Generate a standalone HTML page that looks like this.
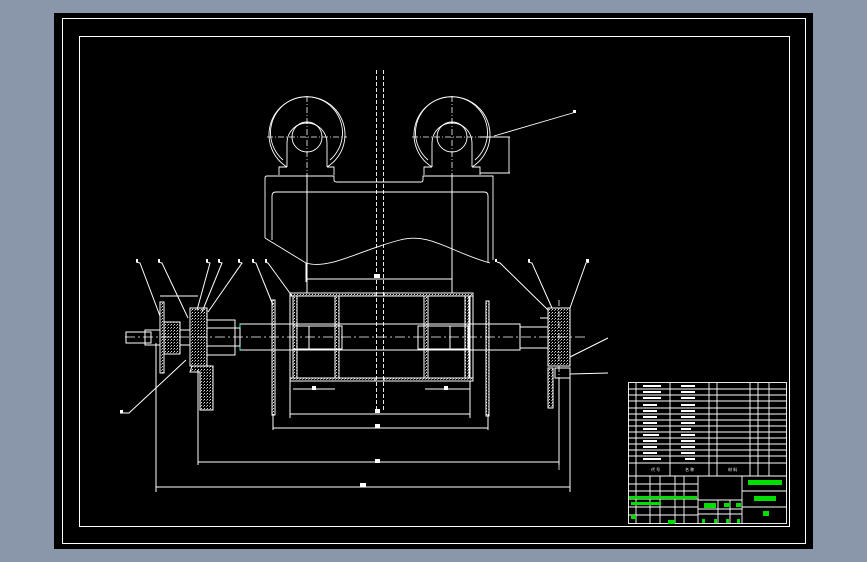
<!DOCTYPE html>
<html><head><style>
html,body{margin:0;padding:0;width:867px;height:562px;overflow:hidden;background:#8a97aa;}
svg{position:absolute;left:0;top:0}
</style></head><body>
<svg width="867" height="562" viewBox="0 0 867 562" xmlns="http://www.w3.org/2000/svg" font-family="Liberation Sans, sans-serif">
<defs>
<pattern id="h" width="3" height="3" patternUnits="userSpaceOnUse"><rect width="3" height="3" fill="#000"/><rect width="1" height="1" fill="#ddd"/><rect x="2" y="1" width="1" height="1" fill="#888"/></pattern>
</defs>
<rect x="54" y="13" width="759" height="536" fill="#000"/>
<g fill="none" stroke="#fff" stroke-width="1">
<rect x="62.5" y="18.5" width="743" height="525"/>
<rect x="79.5" y="36.5" width="710" height="490"/>
<g stroke-width="0.9">
<path d="M287 167 A38 38 0 1 1 327 167"/><path d="M283 160 A36 36 0 1 1 330 160" />
<path d="M287 167 L287 143 A20 20 0 0 1 327 143 L327 167"/>
<circle cx="307" cy="137" r="15"/>
<path d="M279 175 L279 167 L287 167 M327 167 L334 167 L334 175"/>
<path d="M432 167 A38 38 0 1 1 472 167"/><path d="M428 160 A36 36 0 1 1 475 160"/>
<path d="M432 167 L432 143 A20 20 0 0 1 472 143 L472 167"/>
<circle cx="452" cy="137" r="15"/>
<path d="M424 175 L424 167 L432 167 M472 167 L480 167 L480 175"/>
<path d="M265 238 L265 178 Q265 176 267 176 L334 176 L334 180 Q334 182 337 182 L421 182 Q423 182 423 180 L423 176 L493 176 L493 260"/>
<path d="M272 240 L272 196 Q272 192 276 192 L484 192 Q488 192 488 196 L488 263"/>
<path d="M265 238 L306 263 C330 270 360 250 400 240 C430 232 450 252 490 263"/>
<path d="M494 136 L576 112 M480 137 L510 137 M480 173 L510 173 M509 137 L509 173"/>
</g>
<g stroke-dasharray="6 2 1 2" stroke-width="0.8">
<line x1="267" y1="137" x2="347" y2="137"/><line x1="412" y1="137" x2="492" y2="137"/>
<line x1="307" y1="96" x2="307" y2="175"/><line x1="452" y1="96" x2="452" y2="175"/>
</g>
<g stroke-dasharray="4 2" stroke-width="0.9">
<line x1="376.5" y1="70" x2="376.5" y2="412"/><line x1="383.5" y1="70" x2="383.5" y2="412"/>
</g>
<line x1="307" y1="175" x2="307" y2="295"/><line x1="452" y1="175" x2="452" y2="295"/>
<line x1="306" y1="279" x2="452" y2="279"/>
<rect x="290" y="293" width="183" height="88"/>
<rect x="293" y="296" width="177" height="82"/>
<rect x="293" y="296" width="4" height="82" fill="url(#h)"/>
<rect x="335" y="296" width="4" height="82" fill="url(#h)"/>
<rect x="424" y="296" width="4" height="82" fill="url(#h)"/>
<rect x="465" y="296" width="4" height="82" fill="url(#h)"/>
<rect x="290" y="293" width="85" height="3" fill="url(#h)"/>
<rect x="384" y="293" width="89" height="3" fill="url(#h)"/>
<rect x="290" y="378" width="85" height="3" fill="url(#h)"/>
<rect x="384" y="378" width="89" height="3" fill="url(#h)"/>
<rect x="272" y="300" width="3" height="115" fill="url(#h)"/>
<rect x="486" y="301" width="3" height="115" fill="url(#h)"/>
<rect x="240" y="324" width="280" height="26"/>
<line x1="240" y1="324" x2="240" y2="350" stroke="#0ff"/>
<rect x="293" y="326" width="49" height="23"/><rect x="418" y="326" width="50" height="23"/>
<line x1="309" y1="326" x2="309" y2="349"/><line x1="450" y1="326" x2="450" y2="349"/>
<rect x="520" y="327" width="28" height="21"/>
<rect x="205" y="320" width="30" height="35"/><rect x="195" y="328" width="45" height="18"/>
<rect x="145" y="330" width="50" height="15"/><rect x="126" y="332" width="25" height="11"/>
<rect x="160" y="302" width="4" height="71" fill="url(#h)"/>
<rect x="164" y="322" width="16" height="32" fill="url(#h)"/>
<rect x="190" y="308" width="17" height="58" fill="url(#h)"/>
<path d="M192 366 L213 366 L213 410 L200 410 L200 372 L190 372 Z" fill="url(#h)"/>
<line x1="160" y1="296" x2="198" y2="296"/>
<rect x="548" y="308" width="22" height="58" fill="url(#h)"/>
<rect x="548" y="368" width="5" height="40" fill="url(#h)"/>
<rect x="555" y="368" width="15" height="10"/>
<line x1="540" y1="318" x2="548" y2="318"/>
<line x1="125" y1="337" x2="585" y2="337" stroke-dasharray="10 3 2 3" stroke-width="0.8"/>
<line x1="559" y1="300" x2="559" y2="470" stroke-dasharray="6 2 1 2" stroke-width="0.8"/>
<path d="M290 381 L290 418 M470 381 L470 418 M290 414 L470 414"/>
<path d="M293 389 L335 389 M425 389 L470 389"/>
<path d="M273 414 L273 430 M488 414 L488 430 M273 428 L488 428"/>
<path d="M198 370 L198 465 M559 378 L559 465 M198 462 L559 462"/>
<path d="M156 343 L156 492 M570 378 L570 492 M156 487 L570 487"/>
<path d="M306 263 L306 282 M452 263 L452 282"/>
<path d="M136 262 L140 263 L160 316 M158 262 L162 263 L188 318 M206 262 L210 263 L197 310 M218 262 L222 263 L202 312 M238 262 L242 263 L208 312 M252 262 L256 263 L273 305 M265 262 L268 263 L292 296 M497 262 L500 263 L548 310 M528 262 L532 263 L552 308 M589 262 L586 263 L570 308 M608 338 L570 357 M608 373 L570 374 M120 413 L129 413 L186 360"/>
</g>
<g fill="#fff">
<rect x="374" y="274" width="6" height="4"/><rect x="375" y="409" width="5" height="4"/><rect x="375" y="424" width="5" height="4"/><rect x="375" y="459" width="5" height="4"/><rect x="360" y="483" width="6" height="4"/><rect x="312" y="386" width="4" height="4"/><rect x="444" y="386" width="4" height="4"/>
<rect x="136" y="259" width="2" height="3"/><rect x="158" y="259" width="2" height="3"/><rect x="206" y="259" width="2" height="3"/><rect x="218" y="259" width="2" height="3"/><rect x="238" y="259" width="2" height="3"/><rect x="252" y="259" width="2" height="3"/><rect x="265" y="259" width="2" height="3"/><rect x="495" y="259" width="2" height="3"/><rect x="528" y="259" width="2" height="3"/><rect x="586" y="259" width="3" height="3"/><rect x="120" y="410" width="3" height="3"/><rect x="573" y="110" width="3" height="3"/>
</g>
<g fill="none" stroke="#fff" stroke-width="0.9">
<rect x="628.5" y="382.5" width="158" height="141"/>
<path d="M628 463 L787 463 M628 476 L787 476"/>
<path d="M636 383 L636 476 M670 383 L670 476 M709 383 L709 476 M717 383 L717 476 M750 383 L750 476 M758 383 L758 476 M769 383 L769 476"/>
<path d="M628 389 L787 389 M628 395 L787 395 M628 401 L787 401 M628 408 L787 408 M628 414 L787 414 M628 420 L787 420 M628 426 L787 426 M628 432 L787 432 M628 438 L787 438 M628 444 L787 444 M628 450 L787 450 M628 456 L787 456"/>
<path d="M698 476 L698 524 M742 476 L742 524 M742 491 L787 491 M742 507 L787 507 M698 500 L742 500 M698 509 L742 509 M698 514 L742 514"/>
<path d="M628 484 L698 484 M628 491 L698 491 M628 499 L698 499 M628 507 L698 507 M628 515 L698 515"/>
<path d="M636 476 L636 524 M650 476 L650 524 M660 476 L660 524 M675 476 L675 524 M684 476 L684 524"/>
<path d="M718 500 L718 524 M730 500 L730 524"/>
</g>
<g fill="#fff">
<rect x="643" y="385" width="18" height="2"/><rect x="681" y="385" width="14" height="2"/>
<rect x="643" y="391" width="18" height="2"/><rect x="681" y="391" width="14" height="2"/>
<rect x="643" y="397" width="18" height="2"/><rect x="681" y="397" width="14" height="2"/>
<rect x="643" y="404" width="14" height="2"/><rect x="681" y="404" width="14" height="2"/>
<rect x="643" y="410" width="14" height="2"/><rect x="681" y="410" width="14" height="2"/>
<rect x="643" y="416" width="14" height="2"/><rect x="681" y="416" width="14" height="2"/>
<rect x="643" y="422" width="14" height="2"/><rect x="681" y="422" width="14" height="2"/>
<rect x="643" y="428" width="14" height="2"/><rect x="681" y="428" width="10" height="2"/>
<rect x="643" y="434" width="16" height="2"/><rect x="681" y="434" width="14" height="2"/>
<rect x="643" y="440" width="14" height="2"/><rect x="681" y="440" width="14" height="2"/>
<rect x="643" y="446" width="14" height="2"/><rect x="681" y="446" width="14" height="2"/>
<rect x="643" y="452" width="14" height="2"/><rect x="681" y="452" width="14" height="2"/>
<rect x="643" y="458" width="18" height="2"/><rect x="685" y="458" width="10" height="2"/>
<text x="651" y="471" font-size="4">代 号</text><text x="685" y="471" font-size="4">名 称</text><text x="728" y="471" font-size="4">材 料</text>
</g>
<g fill="#00e000">
<rect x="748" y="480" width="34" height="5"/><rect x="754" y="496" width="22" height="5"/><rect x="763" y="511" width="6" height="5"/>
<rect x="629" y="496" width="68" height="3"/><rect x="631" y="502" width="30" height="3"/>
<rect x="704" y="503" width="12" height="5"/><rect x="724" y="503" width="6" height="4"/><rect x="736" y="503" width="5" height="4"/>
<rect x="631" y="515" width="5" height="4"/><rect x="668" y="520" width="7" height="4"/>
<rect x="702" y="519" width="3" height="4"/><rect x="714" y="519" width="3" height="4"/><rect x="726" y="519" width="3" height="4"/><rect x="737" y="519" width="3" height="4"/>
</g>
</svg>
</body></html>
